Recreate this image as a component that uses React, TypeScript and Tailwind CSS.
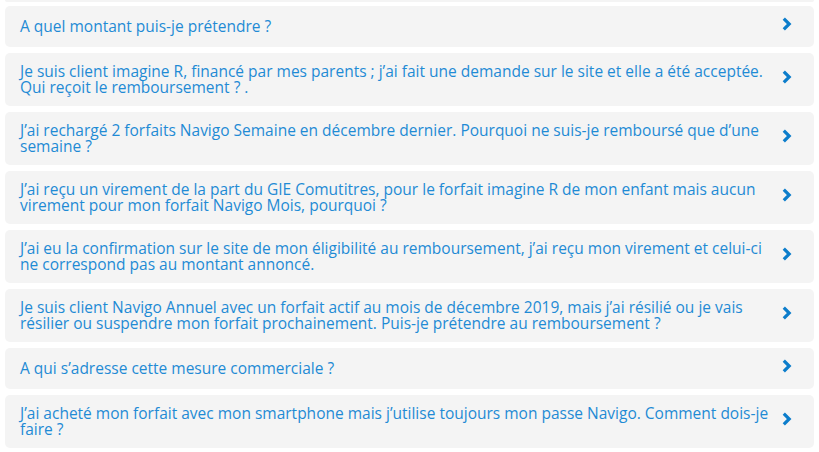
const questions = [
  "A quel montant puis-je prétendre ?",
  "Je suis client imagine R, financé par mes parents ; j’ai fait une demande sur le site et elle a été acceptée. Qui reçoit le remboursement ? .",
  "J’ai rechargé 2 forfaits Navigo Semaine en décembre dernier. Pourquoi ne suis-je remboursé que d’une semaine ?",
  "J’ai reçu un virement de la part du GIE Comutitres, pour le forfait imagine R de mon enfant mais aucun virement pour mon forfait Navigo Mois, pourquoi ?",
  "J’ai eu la confirmation sur le site de mon éligibilité au remboursement, j’ai reçu mon virement et celui-ci ne correspond pas au montant annoncé.",
  "Je suis client Navigo Annuel avec un forfait actif au mois de décembre 2019, mais j’ai résilié ou je vais résilier ou suspendre mon forfait prochainement. Puis-je prétendre au remboursement ?",
  "A qui s’adresse cette mesure commerciale ?",
  "J’ai acheté mon forfait avec mon smartphone mais j’utilise toujours mon passe Navigo. Comment dois-je faire ?",
];

function Chevron() {
  return (
    <svg width="10" height="14" viewBox="0 0 10 14" className="mb-[5px] shrink-0">
      <path
        d="M1.8 1.6 L7.2 7 L1.8 12.4"
        fill="none"
        stroke="#0c7dcb"
        strokeWidth="3.2"
        strokeLinejoin="miter"
      />
    </svg>
  );
}

export default function App() {
  return (
    <div className="min-h-screen bg-white px-[5px] font-['Open_Sans',sans-serif]">
      <div className="mb-[4px] h-[2px] rounded-b-[4px] bg-[#f4f4f4]" />
      <ul className="flex flex-col gap-[6px]">
        {questions.map((q) => (
          <li
            key={q}
            className="flex min-h-[41px] cursor-pointer items-center gap-[13px] rounded-[5px] bg-[#f4f4f4] pb-[11px] pl-[15px] pr-[22px] pt-[10px]"
          >
            <p className="flex-1 text-[15.5px] leading-[16px] text-[#1f8bd5]">{q}</p>
            <Chevron />
          </li>
        ))}
      </ul>
    </div>
  );
}
